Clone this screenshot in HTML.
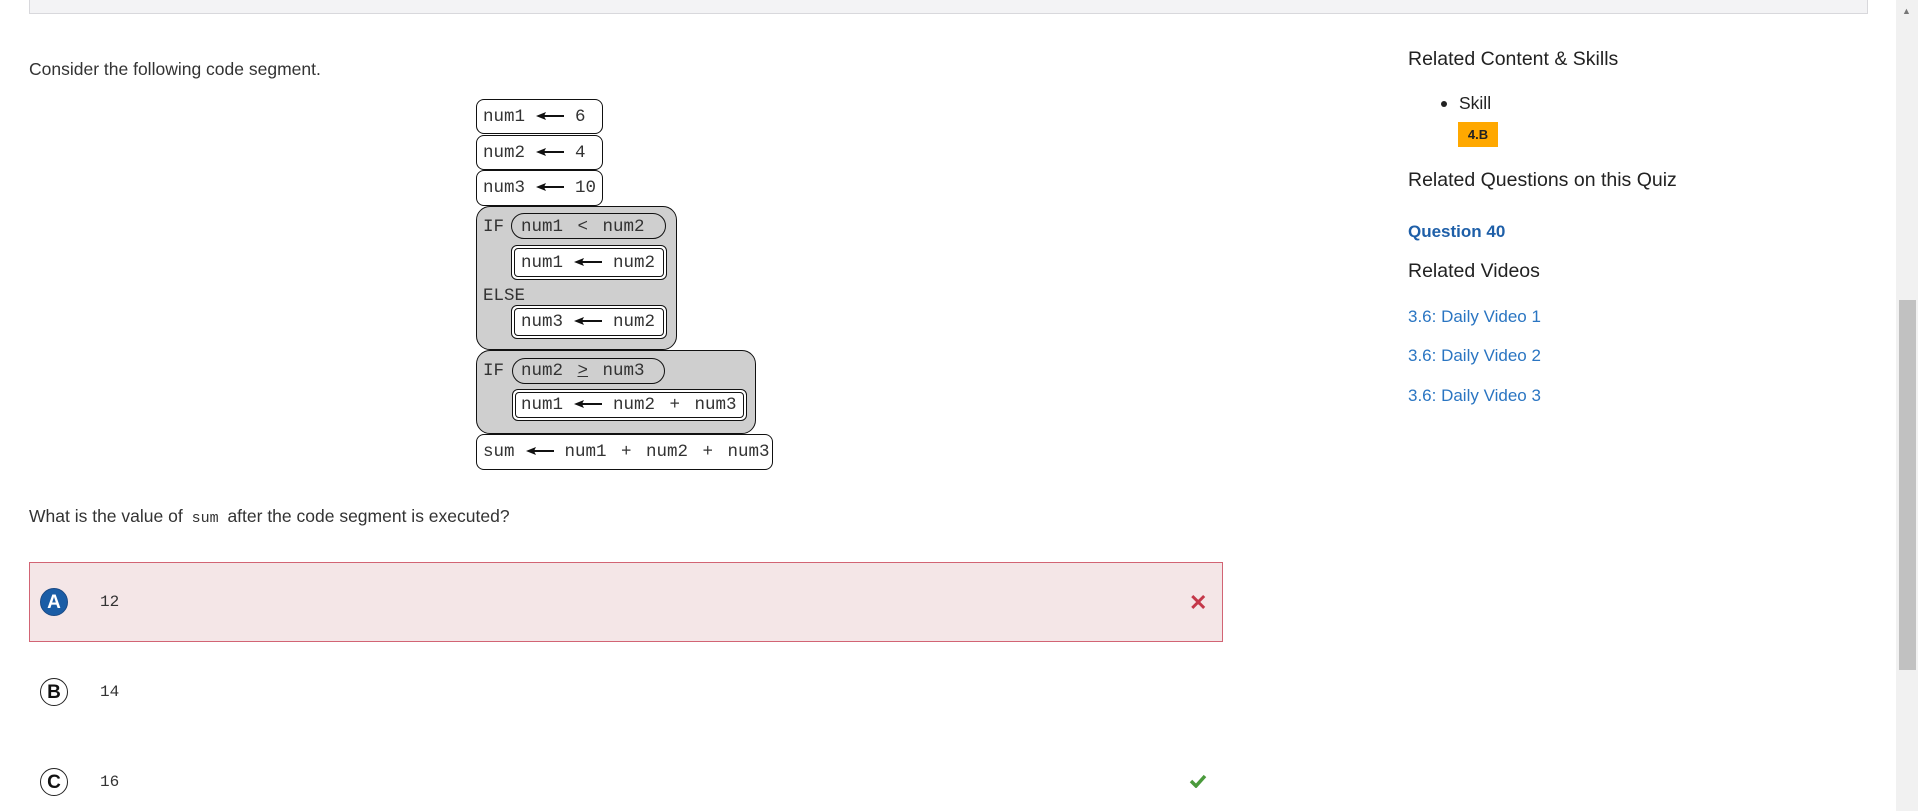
<!DOCTYPE html>
<html><head><meta charset="utf-8"><style>
*{margin:0;padding:0;box-sizing:border-box}
body{width:1918px;height:811px;overflow:hidden;background:#fff;position:relative;font-family:"Liberation Sans",Arial,sans-serif;color:#333}
.a{position:absolute;white-space:nowrap}
.t{font-size:17.5px;line-height:20px}
.mono{font-family:"Liberation Mono",monospace}
.box{position:absolute;border:1.5px solid #111;border-radius:8px;background:#fff}
.gray{position:absolute;border:1.5px solid #111;border-radius:14px;background:#cfcfcf}
.pill{position:absolute;border:1.5px solid #111;border-radius:13px;background:#cfcfcf}
.dbl{position:absolute;border:1.5px solid #111;border-radius:6px;background:#fff;padding:2px}
.dbl>div{border:1.5px solid #111;border-radius:4px;height:100%}
.c{font-family:"Liberation Mono",monospace;font-size:17.5px;color:#333;line-height:20px;word-spacing:4px}
.arr{display:inline-block;width:28px;height:10px;vertical-align:middle;margin:0 11px}
.h{font-size:19.5px;color:#222}
.lk{font-size:17px;color:#2a75c2}
.circ{position:absolute;width:28px;height:28px;border-radius:50%;border:1.5px solid #222;text-align:center;font-weight:bold;font-size:19px;line-height:27px;color:#111}
</style></head><body>
<div class="a" style="left:29px;top:0;width:1839px;height:14px;background:#f3f3f5;border:1px solid #d8d8dc;border-top:none"></div>
<div class="a" style="left:1896px;top:0;width:22px;height:811px;background:#f1f1f1"></div>
<div class="a" style="left:1899px;top:300px;width:17px;height:370px;background:#c1c1c1"></div>
<div class="a" style="left:1902px;top:6px;font-size:9px;color:#777">▲</div>

<div class="a t" style="left:29px;top:59px">Consider the following code segment.</div>

<svg width="0" height="0" style="position:absolute"><defs><symbol id="ar" viewBox="0 0 28 10"><path d="M0 5 L10 1 L8 5 L10 9 Z" fill="#111"/><path d="M7 5 H28" stroke="#111" stroke-width="2"/></symbol></defs></svg>

<div class="box" style="left:476px;top:99px;width:127px;height:35px"></div>
<div class="a c" style="left:483px;top:107px">num1<svg class="arr"><use href="#ar"/></svg>6</div>
<div class="box" style="left:476px;top:135px;width:127px;height:35px"></div>
<div class="a c" style="left:483px;top:143px">num2<svg class="arr"><use href="#ar"/></svg>4</div>
<div class="box" style="left:476px;top:170px;width:127px;height:36px"></div>
<div class="a c" style="left:483px;top:178px">num3<svg class="arr"><use href="#ar"/></svg>10</div>

<div class="gray" style="left:476px;top:206px;width:201px;height:144px"></div>
<div class="a c" style="left:483px;top:217px">IF</div>
<div class="pill" style="left:511px;top:213px;width:155px;height:26px"></div>
<div class="a c" style="left:521px;top:217px">num1 &lt; num2</div>
<div class="dbl" style="left:511px;top:245px;width:156px;height:35px"><div></div></div>
<div class="a c" style="left:521px;top:253px">num1<svg class="arr"><use href="#ar"/></svg>num2</div>
<div class="a c" style="left:483px;top:286px">ELSE</div>
<div class="dbl" style="left:511px;top:305px;width:156px;height:34px"><div></div></div>
<div class="a c" style="left:521px;top:312px">num3<svg class="arr"><use href="#ar"/></svg>num2</div>

<div class="gray" style="left:476px;top:350px;width:280px;height:84px"></div>
<div class="a c" style="left:483px;top:361px">IF</div>
<div class="pill" style="left:512px;top:358px;width:153px;height:26px"></div>
<div class="a c" style="left:521px;top:361px">num2 <u>&gt;</u> num3</div>
<div class="dbl" style="left:512px;top:389px;width:235px;height:32px"><div></div></div>
<div class="a c" style="left:521px;top:395px">num1<svg class="arr"><use href="#ar"/></svg>num2 + num3</div>

<div class="box" style="left:476px;top:434px;width:297px;height:36px"></div>
<div class="a c" style="left:483px;top:442px">sum<svg class="arr"><use href="#ar"/></svg>num1 + num2 + num3</div>

<div class="a t" style="left:29px;top:506px">What is the value of <span class="mono" style="font-size:15px;margin:0 4px">sum</span> after the code segment is executed?</div>

<div class="a" style="left:29px;top:562px;width:1194px;height:80px;background:#f4e6e7;border:1px solid #d26474"></div>
<div class="circ" style="left:40px;top:588px;background:#1a5da6;border-color:#1a4a85;color:#fff">A</div>
<div class="a mono" style="left:100px;top:593px;font-size:16px;color:#333">12</div>
<div class="a" style="left:1189px;top:590px;font-size:22px;color:#c4384a;font-weight:bold">✕</div>
<div class="circ" style="left:40px;top:678px">B</div>
<div class="a mono" style="left:100px;top:683px;font-size:16px;color:#333">14</div>
<div class="circ" style="left:40px;top:768px">C</div>
<div class="a mono" style="left:100px;top:773px;font-size:16px;color:#333">16</div>
<svg class="a" style="left:1189px;top:774px" width="18" height="14"><path d="M2 7 L7 12 L16 2" stroke="#4a9a3c" stroke-width="3.5" fill="none"/></svg>

<div class="a h" style="left:1408px;top:48px">Related Content &amp; Skills</div>
<div class="a" style="left:1441px;top:101px;width:6px;height:6px;border-radius:50%;background:#222"></div>
<div class="a" style="left:1459px;top:93px;font-size:17.5px;color:#222">Skill</div>
<div class="a" style="left:1458px;top:122px;width:40px;height:25px;background:#ffa800;font-size:13px;font-weight:bold;text-align:center;line-height:25px;color:#222">4.B</div>
<div class="a h" style="left:1408px;top:169px">Related Questions on this Quiz</div>
<div class="a" style="left:1408px;top:222px;font-size:17px;font-weight:bold;color:#1e5fa8">Question 40</div>
<div class="a h" style="left:1408px;top:260px">Related Videos</div>
<div class="a lk" style="left:1408px;top:307px">3.6: Daily Video 1</div>
<div class="a lk" style="left:1408px;top:346px">3.6: Daily Video 2</div>
<div class="a lk" style="left:1408px;top:386px">3.6: Daily Video 3</div>
</body></html>
